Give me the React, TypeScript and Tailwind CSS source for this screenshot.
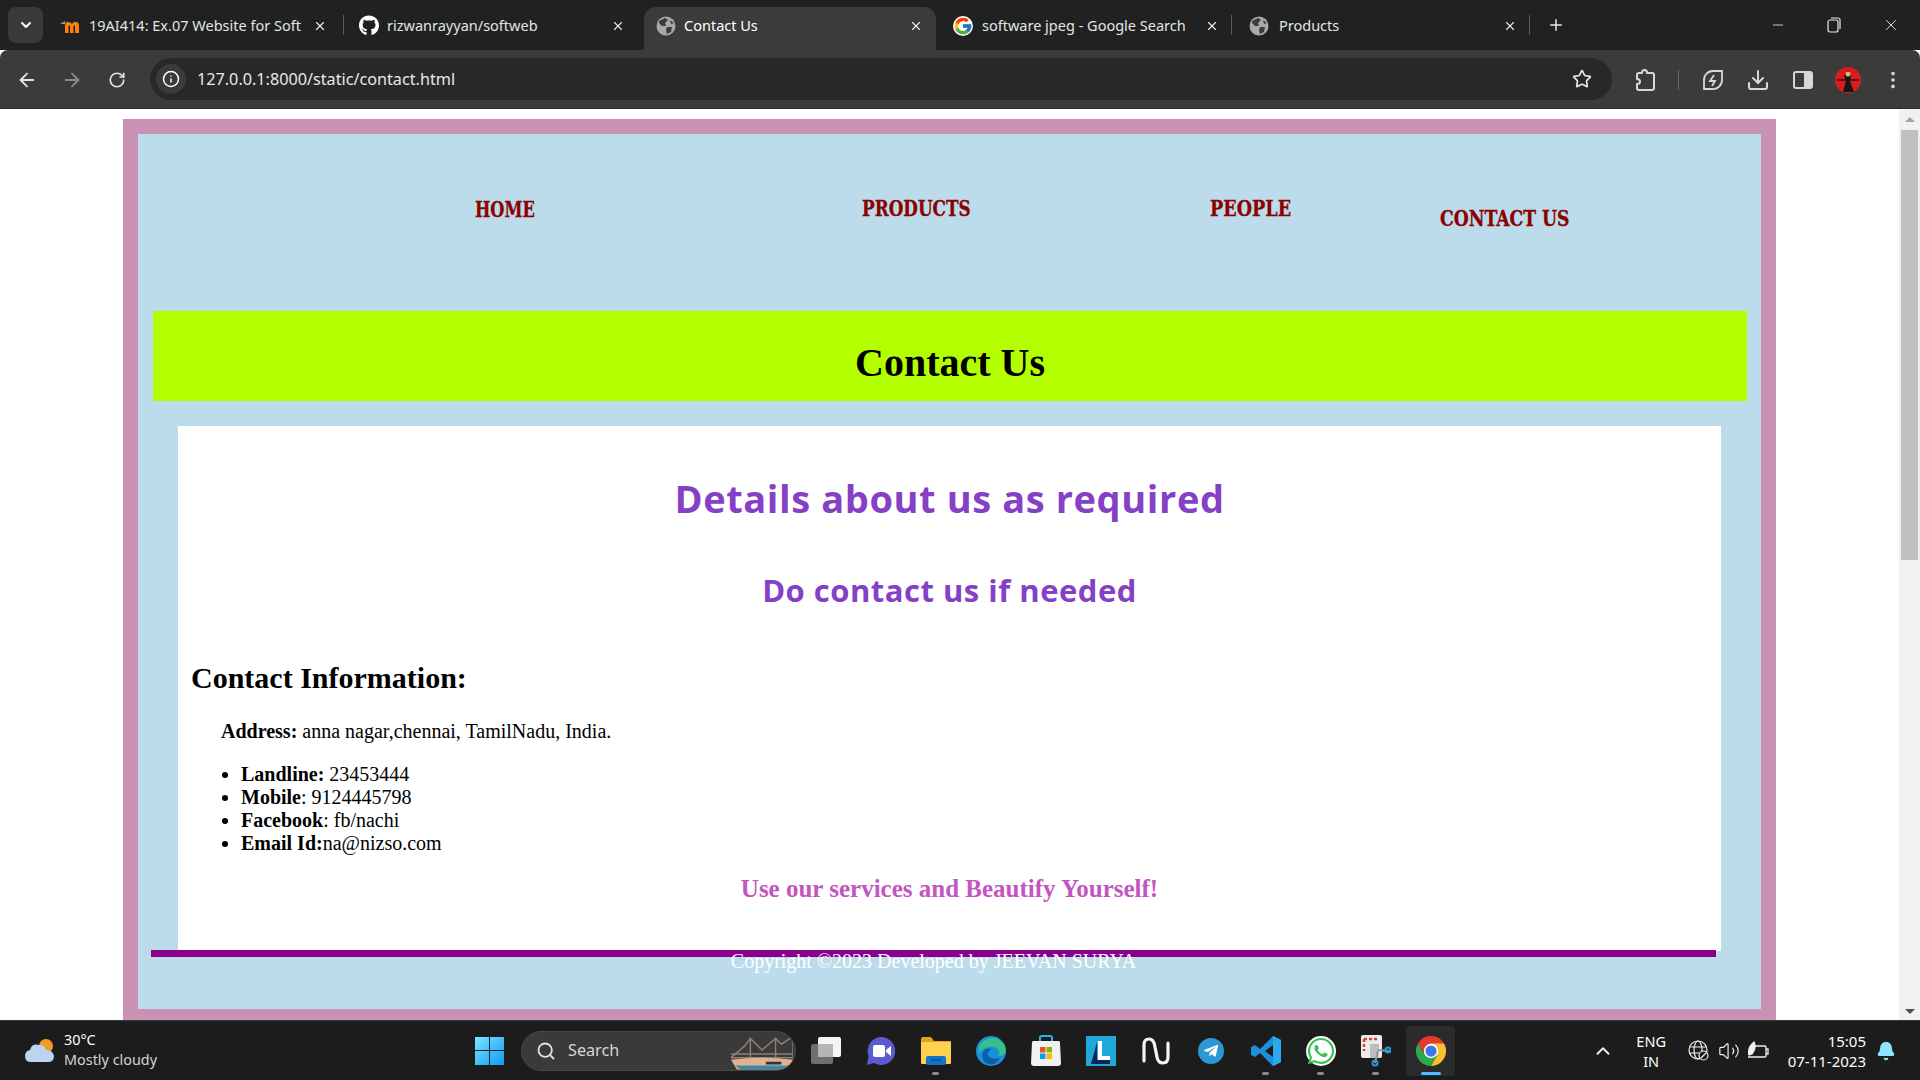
import React from "react"
import { ArrowLeft, ArrowRight, RotateCw, Star, Download, EllipsisVertical, Minus, X, Plus, ChevronDown, ChevronUp, Info, Search, Volume2, Bell } from "lucide-react"
import { FaGithub, FaWhatsapp, FaTelegramPlane } from "react-icons/fa"
import { FcGoogle } from "react-icons/fc"

const Globe = () => (
    <svg width="20" height="20" viewBox="0 0 20 20">
        <circle cx="10" cy="10" r="9.5" fill="#a6a8ab" />
        <path d="M3 5 L9 2 L12 4 L9 7 L10 10 L6 10 L3 7 Z M11 11 L16 11 L15 16 L11 18 L10 14 Z M14 4 L18 7 L15 8 Z" fill="#3c3c3c" />
    </svg>
)

const MoodleIcon = () => (
    <svg width="20" height="16" viewBox="0 0 20 16">
        <path d="M0 6 L5 3 L5 6 Z" fill="#9a9a9a" />
        <path d="M5 15 V7 Q5 4 8 4 Q11 4 12 6 Q14 3 16 4 Q19 4 19 8 V15 H15 V8 Q14 7 13.500 8 V15 H10 V8 Q9 7 8.500 8 V15 Z" fill="#f98012" />
    </svg>
)

const tabs = [
    { title: "19AI414: Ex.07 Website for Soft", icon: <MoodleIcon />, className: "w-[296px] pl-[12px] pr-[17px]", text: "ml-[9px]", sep: true },
    { title: "rizwanrayyan/softweb", icon: <FaGithub size={21} color="#fff" />, className: "w-[300px] pl-[15px] pr-[19px]", text: "ml-[8px]", sep: false },
    { title: "Contact Us", icon: <Globe />, className: "w-[292px] pl-[12px] pr-[13px]", text: "ml-[8px]", active: true, sep: false },
    { title: "software jpeg - Google Search", icon: <FcGoogle size={20} className="bg-white rounded-full" />, className: "w-[296px] pl-[17px] pr-[13px]", text: "ml-[9px]", sep: true },
    { title: "Products", icon: <Globe />, className: "w-[298px] pl-[17px] pr-[13px]", text: "ml-[10px]", sep: true },
]

const ChromeLogo = ({ size = 30 }: { size?: number }) => (
    <svg width={size} height={size} viewBox="0 0 48 48">
        <path d="M24 24 L44.800 12 A24 24 0 0 0 3.200 12 L13.600 30 Z" fill="#e33b2e" />
        <path d="M24 24 L13.600 30 L3.200 12 A24 24 0 0 0 24 48 L34.400 30 Z" fill="#2da94f" />
        <path d="M24 24 L24 12 L44.800 12 A24 24 0 0 1 24 48 L34.400 30 Z" fill="#fbc02d" />
        <circle cx="24" cy="24" r="11.500" fill="#fff" />
        <circle cx="24" cy="24" r="9" fill="#3b78e7" />
    </svg>
)

const taskbarIcons = [
    {
        key: "taskview",
        icon: (
            <svg width="30" height="30" viewBox="0 0 30 30">
                <rect x="0" y="8" width="22" height="20" rx="2" fill="#6f6f6f" />
                <rect x="7" y="1" width="23" height="20" rx="2" fill="#f4f4f4" />
                <rect x="7" y="8" width="15" height="13" fill="#b5b5b5" />
            </svg>
        ),
    },
    {
        key: "meet",
        open: false,
        icon: (
            <svg width="30" height="30" viewBox="0 0 30 30">
                <path d="M15 1 A14 14 0 1 1 8 27 L1 29 L2.500 20 A14 14 0 0 1 15 1 Z" fill="#5b5bd0" />
                <rect x="7" y="9" width="12" height="12" rx="2" fill="#fff" />
                <path d="M20 14 L25 10 V20 L20 16 Z" fill="#fff" />
            </svg>
        ),
    },
    {
        key: "files",
        open: true,
        icon: (
            <svg width="30" height="28" viewBox="0 0 30 28">
                <path d="M0 2 Q0 0 2 0 H10 L13 4 H30 V26 H0 Z" fill="#e0a21b" />
                <rect x="0" y="5" width="30" height="22" rx="1" fill="#fcd24e" />
                <rect x="5" y="19" width="20" height="9" rx="2" fill="#1175c8" />
                <rect x="10" y="22" width="10" height="1.500" fill="#0a4f91" />
            </svg>
        ),
    },
    {
        key: "edge",
        icon: (
            <svg width="30" height="30" viewBox="0 0 30 30">
                <circle cx="15" cy="15" r="15" fill="#1b8fdb" />
                <path d="M3 10 Q10 0 20 2 Q30 6 30 16 Q28 20 22 20 Q26 14 18 11 Q8 9 3 18 Z" fill="#35c08a" />
                <path d="M12 28 Q4 24 7 16 Q10 11 16 13 Q11 15 12 19 Q14 24 24 22 Q20 30 12 28 Z" fill="#0d5ea8" />
            </svg>
        ),
    },
    {
        key: "store",
        icon: (
            <svg width="30" height="32" viewBox="0 0 30 32">
                <path d="M9 7 V3 Q9 1 11 1 H19 Q21 1 21 3 V7" fill="none" stroke="#29b0e8" strokeWidth="2" />
                <path d="M2 6 H28 Q29 6 29 8 L30 28 Q30 31 27 31 H3 Q0 31 0 28 L1 8 Q1 6 2 6 Z" fill="#f1f1f1" />
                <rect x="9" y="12" width="5.500" height="5.500" fill="#f25022" />
                <rect x="15.500" y="12" width="5.500" height="5.500" fill="#7fba00" />
                <rect x="9" y="18.500" width="5.500" height="5.500" fill="#00a4ef" />
                <rect x="15.500" y="18.500" width="5.500" height="5.500" fill="#ffb900" />
            </svg>
        ),
    },
    {
        key: "lens",
        icon: (
            <svg width="30" height="30" viewBox="0 0 30 30">
                <rect width="30" height="30" fill="#1fa9d8" />
                <path d="M5 28 L11 6 V24 H24 V28 Z" fill="#10235c" />
                <path d="M12 5 H16 V20 H24 V24 H12 Z" fill="#fff" />
            </svg>
        ),
    },
    {
        key: "notion",
        icon: (
            <svg width="28" height="28" viewBox="0 0 28 28">
                <path d="M2 24 V8 Q2 2 7 2 Q12 2 13 10 L15 20 Q16 26 21 26 Q26 26 26 20 V6" fill="none" stroke="#f4f4f4" strokeWidth="3.200" strokeLinecap="round" />
            </svg>
        ),
    },
    {
        key: "telegram",
        icon: (
            <div className="w-[26px] h-[26px] rounded-full bg-[#2a98d4] flex items-center justify-center">
                <FaTelegramPlane size={16} color="#fff" />
            </div>
        ),
    },
    {
        key: "vscode",
        open: true,
        icon: (
            <svg width="30" height="30" viewBox="0 0 30 30">
                <path d="M22 0 L30 4 V26 L22 30 L9 17 L4 21 L0 19 V11 L4 9 L9 13 Z M22 9 L14 15 L22 21 Z" fill="#1a8fdc" />
                <path d="M22 0 L30 4 V26 L22 30 Z" fill="#2ba8ee" />
            </svg>
        ),
    },
    {
        key: "whatsapp",
        open: true,
        icon: (
            <div className="w-[30px] h-[30px] rounded-full bg-white flex items-center justify-center relative">
                <FaWhatsapp size={30} color="#36c15a" />
            </div>
        ),
    },
    {
        key: "snip",
        open: true,
        icon: (
            <svg width="30" height="32" viewBox="0 0 30 32">
                <rect x="0" y="0" width="21" height="23" rx="2" fill="#ececec" />
                <path d="M3 4 H16 M3 4 V16" stroke="#d9432a" strokeWidth="2.500" strokeDasharray="3 2" fill="none" />
                <rect x="9" y="9" width="9" height="14" fill="#bdbdbd" />
                <path d="M14 28 L17 15 M17 15 L28 16" stroke="#9a9a9a" strokeWidth="2" />
                <circle cx="27" cy="15" r="2.500" fill="none" stroke="#2298de" strokeWidth="2" />
                <circle cx="14" cy="28" r="2.500" fill="none" stroke="#2298de" strokeWidth="2" />
            </svg>
        ),
    },
    { key: "chrome", active: true, icon: <ChromeLogo /> },
]

const navLinks = [
    { label: "HOME", className: "w-[387px] mt-[61px]", text: "[transform:scaleX(0.82)]" },
    { label: "PRODUCTS", className: "w-[348px] mt-[60px]", text: "[transform:scaleX(0.85)]" },
    { label: "PEOPLE", className: "w-[230px] mt-[60px]", text: "[transform:scaleX(0.89)]" },
    { label: "CONTACT US", className: "mt-[70px]", text: "[transform:scaleX(0.87)]" },
]

const TabStrip = () => (
    <div className="h-[50px] bg-[#202221] flex items-end text-[14.5px] text-[#e4e4e4] shrink-0">
        <div className="w-[35px] h-[36px] ml-[8px] mb-[7px] mr-[5px] rounded-lg bg-[#3a3a3a] flex items-center justify-center">
            <ChevronDown size={16} color="#fff" strokeWidth={3} />
        </div>
        {tabs.map((t) => (
            <div
                key={t.title}
                className={`${t.className} h-[43px] pb-[6px] flex items-center relative shrink-0 ${t.active ? "bg-[#3b3b3b] rounded-t-xl text-white" : ""}`}
            >
                <span className="w-[20px] flex justify-center shrink-0">{t.icon}</span>
                <span className={`${t.text} flex-1 whitespace-nowrap overflow-hidden`}>{t.title}</span>
                <X size={14} color="#e8e8e8" strokeWidth={2} className="shrink-0 ml-2" />
                {t.sep && <span className="absolute right-0 top-[8px] h-[20px] w-px bg-[#5a5a5a]" />}
            </div>
        ))}
        <Plus size={18} color="#e8e8e8" className="ml-[17px] mb-[16px]" />
        <div className="flex-1" />
        <div className="flex items-center gap-[41px] mb-[16px] mr-[20px]">
            <Minus size={16} color="#e8e8e8" strokeWidth={1.25} />
            <svg width="14" height="16" viewBox="0 0 14 16" fill="none" stroke="#e8e8e8" strokeWidth="1.200">
                <rect x="1" y="3" width="10" height="12" rx="2" />
                <path d="M4 1 H11 Q13 1 13 3 V12" />
            </svg>
            <X size={18} color="#e8e8e8" strokeWidth={1.25} />
        </div>
    </div>
)

const Toolbar = () => (
    <div className="h-[59px] bg-[#3b3b3b] rounded-t-lg flex items-center shrink-0 border-b border-[#2c2c2c]">
        <div className="flex items-center pl-[16px] pt-[1px] w-[150px]">
            <ArrowLeft size={22} color="#e3e3e3" />
            <ArrowRight size={22} color="#8a8a8a" className="ml-[23px]" />
            <RotateCw size={18} color="#e3e3e3" strokeWidth={2.2} className="ml-[25px]" />
        </div>
        <div className="w-[1462px] h-[42px] rounded-full bg-[#282828] flex items-center pl-[6px] pr-[20px]">
            <div className="w-[30px] h-[30px] rounded-full bg-[#3b3b3b] flex items-center justify-center">
                <Info size={18} color="#fff" />
            </div>
            <span className="ml-[11px] pt-[1px] flex-1 text-[16.2px] text-[#e8e8e8]">127.0.0.1:8000/static/contact.html</span>
            <Star size={20} color="#e8e8e8" strokeWidth={2} />
        </div>
        <div className="flex items-center pl-[22px] pt-[1px] text-[#d8d8d8]">
            <svg width="22" height="24" viewBox="0 0 22 24" fill="none" stroke="currentColor" strokeWidth="2" strokeLinejoin="round">
                <path d="M5 5 H8 Q8 2 10.500 2 Q13 2 13 5 H18 Q20 5 20 7 V20 Q20 22 18 22 H5 Q3 22 3 20 V16 Q6 16 6 13.500 Q6 11 3 11 V7 Q3 5 5 5 Z" />
            </svg>
            <span className="w-px h-[20px] bg-[#6a6a6a] ml-[22px] mr-[22px]" />
            <svg width="24" height="24" viewBox="0 0 24 24" fill="none" stroke="currentColor" strokeWidth="1.800">
                <path d="M3 13 A9 9 0 0 1 12 3 H21 V12 A9 9 0 0 1 11 21 H3 Z" />
                <path d="M13 7 L9 13 H14 L11 18" />
            </svg>
            <Download size={24} className="ml-[21px]" />
            <svg width="20" height="20" viewBox="0 0 20 20" className="ml-[23px]">
                <rect x="1" y="2" width="18" height="16" rx="2" fill="none" stroke="currentColor" strokeWidth="2" />
                <rect x="11" y="2" width="8" height="16" fill="currentColor" />
            </svg>
            <div className="w-[26px] h-[26px] rounded-full bg-[#e01a1a] ml-[22px] flex items-center justify-center overflow-hidden">
                <svg width="26" height="26" viewBox="0 0 26 26">
                    <path d="M13 3 L16 8 L15 14 L19 25 H8 L11 14 L9 9 Z" fill="#15151a" />
                    <circle cx="13" cy="7" r="2.500" fill="#d9b866" />
                    <path d="M2 13 H24" stroke="#15151a" strokeWidth="1.500" />
                </svg>
            </div>
            <EllipsisVertical size={22} className="ml-[21px]" />
        </div>
    </div>
)

const Scrollbar = () => (
    <div className="w-[21px] bg-[#f1f1f1] flex flex-col items-center relative">
        <div className="mt-[8px] h-0 w-0 border-x-[5px] border-x-transparent border-b-[5px] border-b-[#a3a3a3]" />
        <div className="mt-[8px] w-[17px] h-[430px] bg-[#c1c1c1]" />
        <div className="flex-1" />
        <div className="mb-[6px] h-0 w-0 border-x-[5px] border-x-transparent border-t-[5px] border-t-[#505050]" />
    </div>
)

const Page = () => (
    <div className="flex-1 flex min-h-0 bg-white">
        <div className="flex-1 overflow-hidden pt-[10px] pl-[123px]">
            <div className="w-[1653px] h-[905px] border-[15px] border-[#c992b5] bg-[#bcdcec] pl-[15px] font-['Liberation_Serif',serif] text-[20px] text-black leading-[23px]">
                <nav className="h-[177px] flex pl-[322px] font-bold text-[#8b0000] text-[22px] leading-[28px] font-['DejaVu_Serif_Condensed','DejaVu_Serif',serif]">
                    {navLinks.map((n) => (
                        <div key={n.label} className={n.className}>
                            <a className={`inline-block origin-left ${n.text} [-webkit-text-stroke:0.3px_#8b0000] whitespace-nowrap`}>{n.label}</a>
                        </div>
                    ))}
                </nav>
                <div className="w-[1594px] h-[90px] bg-[#b3ff00] pt-[29px] text-center font-bold text-[40px] leading-[46px]">Contact Us</div>
                <div className="w-[1543px] h-[525px] ml-[25px] mt-[25px] bg-white">
                    <h1 className="pt-[49px] text-center font-['Open_Sans',sans-serif] font-bold text-[38px] leading-[46px] tracking-[0.6px] text-[#8640c6]">Details about us as required</h1>
                    <h2 className="mt-[49px] text-center font-['Open_Sans',sans-serif] font-bold text-[31px] leading-[40px] tracking-[0.5px] text-[#8640c6]">Do contact us if needed</h2>
                    <h3 className="mt-[51px] ml-[13px] font-bold text-[30px] leading-[34px]">Contact Information:</h3>
                    <p className="mt-[25px] ml-[43px]"><b>Address:</b> anna nagar,chennai, TamilNadu, India.</p>
                    <ul className="mt-[20px] ml-[63px] list-disc">
                        <li><b>Landline:</b> 23453444</li>
                        <li><b>Mobile</b>: 9124445798</li>
                        <li><b>Facebook</b>: fb/nachi</li>
                        <li><b>Email Id:</b>na@nizso.com</li>
                    </ul>
                    <p className="mt-[19px] text-center font-bold text-[25px] leading-[29px] text-[#c455bf]">Use our services and Beautify Yourself!</p>
                </div>
                <div className="relative w-[1565px] h-[7px] -mt-px -ml-[2px] bg-[#8b008b]" />
                <div className="w-[1565px] -mt-[7px] -ml-[2px] text-center text-white relative">Copyright ©2023 Developed by JEEVAN SURYA</div>
            </div>
        </div>
        <Scrollbar />
    </div>
)

const Taskbar = () => (
    <div className="h-[60px] bg-[#1c1c1c] border-t border-[#3a3a3a] flex items-center shrink-0 text-white relative">
        <div className="w-[475px] flex items-center pl-[25px]">
            <svg width="30" height="30" viewBox="0 0 30 30">
                <circle cx="21" cy="10" r="7" fill="#f59a23" />
                <path d="M6 26 Q0 26 0 20 Q0 15 5 14 Q7 7 14 9 Q20 9 21 14 Q28 14 29 20 Q29 26 23 26 Z" fill="#bcd3f2" />
            </svg>
            <div className="ml-[9px] text-[14.4px] leading-[20px] -mt-[2px]">
                <div>30°C</div>
                <div className="text-[#d4d4d4]">Mostly cloudy</div>
            </div>
        </div>
        <svg width="29" height="29" viewBox="0 0 29 29">
            <defs>
                <linearGradient id="win" x1="0" y1="0" x2="1" y2="1">
                    <stop offset="0" stopColor="#7ae5ff" />
                    <stop offset="1" stopColor="#0f98f5" />
                </linearGradient>
            </defs>
            <path d="M0 1 H14 V14 H0 Z M15 1 H29 V14 H15 Z M0 15 H14 V29 H0 Z M15 15 H29 V29 H15 Z" fill="url(#win)" />
        </svg>
        <div className="ml-[17px] w-[275px] h-[40px] rounded-full bg-[#3a3a3a] border border-[#474747] flex items-center pl-[14px] overflow-hidden">
            <Search size={20} color="#e0e0e0" strokeWidth={2.2} />
            <span className="ml-[12px] flex-1 text-[16.2px] text-[#d6d6d6]">Search</span>
            <svg width="62" height="38" viewBox="0 0 64 38" className="mr-[2px]">
                <path d="M0 26 L14 14 L20 6 L32 18 L46 6 L52 12 L64 4 V26 Z" fill="none" stroke="#8d8078" strokeWidth="1.500" />
                <path d="M0 22 H64 M20 6 V26 M46 6 V26" stroke="#8d8078" strokeWidth="1.500" />
                <path d="M0 28 Q30 24 64 28 V38 H6 Z" fill="#e3b190" />
                <path d="M4 34 H60 V38 H10 Z" fill="#3a89a6" />
                <path d="M36 30 H52 V33 H36 Z" fill="#27364f" />
            </svg>
        </div>
        <div className="ml-[2px] flex items-center">
            {taskbarIcons.map((i) => (
                <div key={i.key} className="w-[55px] h-[50px] flex items-center justify-center relative">
                    {i.active && <div className="absolute inset-y-0 inset-x-[3px] rounded bg-[#2b2b2b]" />}
                    <div className="relative">{i.icon}</div>
                    {i.open && <div className="absolute bottom-[1px] w-[7px] h-[3px] rounded-full bg-[#8a8a8a]" />}
                    {i.active && <div className="absolute bottom-[1px] w-[20px] h-[3px] rounded-full bg-[#4cc2ff]" />}
                </div>
            ))}
        </div>
        <div className="flex-1" />
        <div className="flex items-center text-[14.5px] mr-[24px]">
            <ChevronUp size={22} color="#f0f0f0" strokeWidth={2} />
            <div className="ml-[22px] text-center leading-[20px]">
                <div>ENG</div>
                <div>IN</div>
            </div>
            <svg width="21" height="21" viewBox="0 0 21 21" fill="none" stroke="#f0f0f0" strokeWidth="1.200" className="ml-[22px]">
                <circle cx="10" cy="10" r="9" />
                <ellipse cx="10" cy="10" rx="4" ry="9" />
                <path d="M1 7 H19 M1 13 H12" />
                <circle cx="15.500" cy="15.500" r="4.500" fill="#1c1c1c" />
                <path d="M12.500 18.500 L18.500 12.500" />
            </svg>
            <Volume2 size={22} color="#f0f0f0" strokeWidth={1.3} className="ml-[9px]" />
            <svg width="22" height="20" viewBox="0 0 22 20" fill="none" stroke="#f0f0f0" strokeWidth="1.300" className="ml-[7px]">
                <path d="M4 5 H18 Q19 5 19 6 V15 Q19 16 18 16 H1" />
                <path d="M19 8 H21 V13 H19" />
                <path d="M2 14 Q0 7 7 1 Q10 7 5 13 Z" fill="#f0f0f0" />
            </svg>
            <div className="ml-[9px] text-right leading-[20px] w-[88px] text-[15px]">
                <div>15:05</div>
                <div>07-11-2023</div>
            </div>
            <Bell size={20} color="#90e6ff" fill="#90e6ff" className="ml-[10px]" />
        </div>
    </div>
)

const App = () => {
    return (
        <div className="w-[1920px] h-[1080px] flex flex-col overflow-hidden font-['Noto_Sans',sans-serif]">
            <TabStrip />
            <Toolbar />
            <Page />
            <Taskbar />
        </div>
    )
}

export default App
